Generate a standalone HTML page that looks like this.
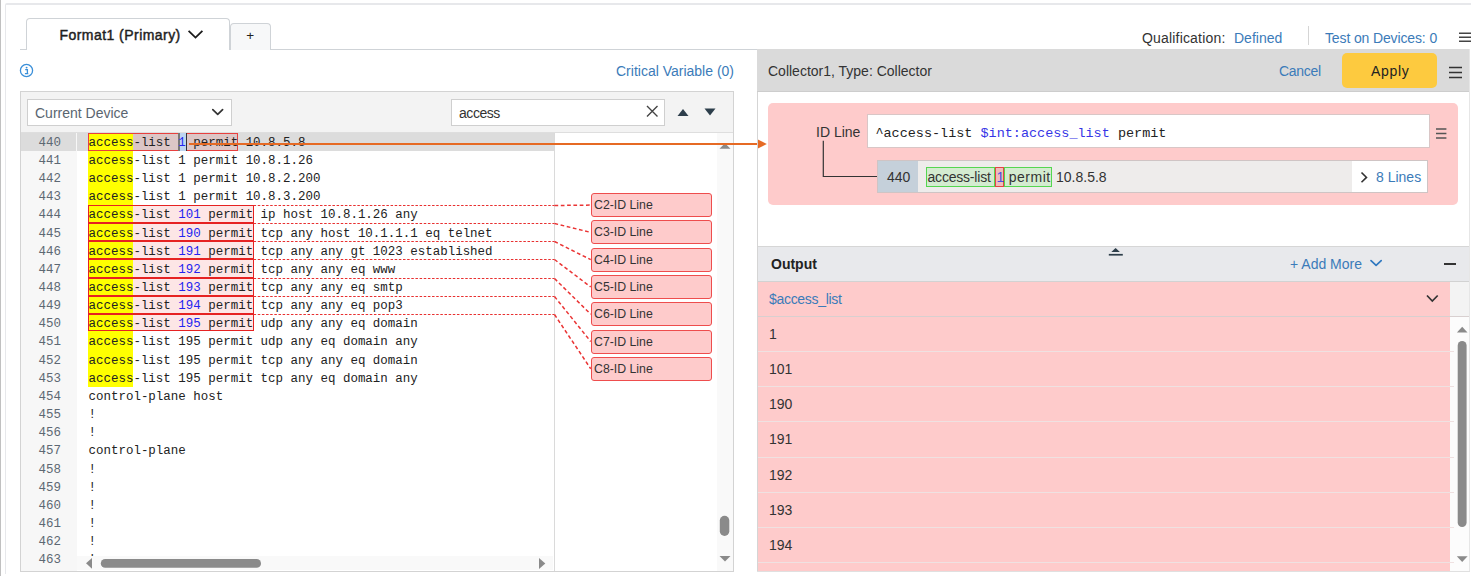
<!DOCTYPE html>
<html><head><meta charset="utf-8">
<style>
*{box-sizing:border-box;margin:0;padding:0}
html,body{width:1471px;height:576px;overflow:hidden;background:#fff;position:relative;font-family:"Liberation Sans",sans-serif;font-size:14px;color:#333}
.a{position:absolute}
.t{position:absolute;white-space:pre;line-height:20px;font-size:14px}
.mono{font-family:"Liberation Mono",monospace}
</style></head><body>
<!-- page chrome -->
<div class="a" style="left:0;top:0;width:1px;height:576px;background:#c0c0c0"></div>
<div class="a" style="left:5px;top:3px;width:1480px;height:571px;border-top:2px solid #e7e8eb;border-left:1px solid #e7e8eb;border-radius:2px 0 0 0"></div>

<!-- tabs -->
<div class="a" style="left:20px;top:49px;width:737px;height:1px;background:#cfd3d7"></div>
<div class="a" style="left:26px;top:18px;width:204px;height:32px;border:1px solid #cfd3d7;border-bottom:none;border-radius:4px 4px 0 0;background:#fff"></div>
<div class="t" style="left:59.5px;top:25px;color:#1e1e1e;-webkit-text-stroke:0.45px #1e1e1e;letter-spacing:0.45px">Format1 (Primary)</div>
<svg class="a" style="left:186px;top:28px" width="19" height="13" viewBox="0 0 19 13"><path d="M2.6 2.8 L9.5 9.6 L16.4 2.8" fill="none" stroke="#1b1b1b" stroke-width="1.8"/></svg>
<div class="a" style="left:230px;top:23px;width:41px;height:27px;border:1px solid #cfd3d7;border-bottom:none;border-radius:4px 4px 0 0;background:#f7f8f9"></div>
<div class="t" style="left:246.3px;top:26px;color:#222;font-size:13.5px">+</div>

<!-- info icon -->
<svg class="a" style="left:19px;top:63px" width="15" height="15" viewBox="0 0 15 15"><circle cx="7.5" cy="7.5" r="6.1" fill="none" stroke="#3a8fd9" stroke-width="1.3"/><circle cx="7.6" cy="4.6" r="0.95" fill="#3a8fd9"/><path d="M6.2 6.6 H8.4 V10.3 M5.9 10.6 H9.3" fill="none" stroke="#3a8fd9" stroke-width="1.3"/></svg>
<div class="t" style="left:616px;top:61px;color:#3b7bb9">Critical Variable (0)</div>

<!-- editor -->
<div class="a" style="left:20px;top:91px;width:714px;height:481px;border:1px solid #d3d3d3;background:#fff"></div>
<div class="a" style="left:21px;top:92px;width:712px;height:41px;background:#f3f3f3;border-bottom:1px solid #dedede"></div>
<div class="a" style="left:27px;top:99px;width:205px;height:27px;border:1px solid #cfcfcf;background:#fff"></div>
<div class="t" style="left:35px;top:103px;color:#5a6570">Current Device</div>
<svg class="a" style="left:209.5px;top:107px" width="15" height="10" viewBox="0 0 15 10"><path d="M2.8 2.6 L7.7 7.3 L12.6 2.6" fill="none" stroke="#333" stroke-width="1.7" stroke-linecap="round" stroke-linejoin="round"/></svg>
<div class="a" style="left:451px;top:99px;width:214px;height:27px;border:1px solid #cfcfcf;background:#fff"></div>
<div class="t" style="left:459px;top:103px;color:#333;letter-spacing:-0.45px">access</div>
<svg class="a" style="left:645px;top:104px" width="14" height="14" viewBox="0 0 14 14"><path d="M2 2 L12.5 12.5 M12.5 2 L2 12.5" fill="none" stroke="#444" stroke-width="1.4"/></svg>
<svg class="a" style="left:676px;top:107px" width="14" height="10" viewBox="0 0 14 10"><path d="M1.5 9 L7 2 L12.5 9 Z" fill="#2d3e4b"/></svg>
<svg class="a" style="left:703px;top:107px" width="14" height="10" viewBox="0 0 14 10"><path d="M1.5 1.5 L12.5 1.5 L7 8.5 Z" fill="#2d3e4b"/></svg>

<!-- code area -->
<div class="a" style="left:21px;top:133px;width:55.5px;height:438px;background:#f7f7f7"></div>
<div class="a" style="left:21px;top:132.5px;width:55px;height:18.2px;background:#dcdcdc"></div>
<div class="a" style="left:77px;top:132.5px;width:477px;height:18.2px;background:#dcdcdc"></div>
<div class="a" style="left:554px;top:133px;width:1px;height:438px;background:#dadada"></div>
<div class="a" style="left:717px;top:133px;width:16px;height:438px;background:#f9f9f9"></div>
<div class="a" style="left:88px;top:133.00px;width:45.38px;height:18.15px;background:#ffff00"></div>
<div class="a" style="left:88px;top:151.15px;width:45.38px;height:18.15px;background:#ffff00"></div>
<div class="a" style="left:88px;top:169.30px;width:45.38px;height:18.15px;background:#ffff00"></div>
<div class="a" style="left:88px;top:187.45px;width:45.38px;height:18.15px;background:#ffff00"></div>
<div class="a" style="left:88px;top:205.60px;width:45.38px;height:18.15px;background:#ffff00"></div>
<div class="a" style="left:88px;top:223.75px;width:45.38px;height:18.15px;background:#ffff00"></div>
<div class="a" style="left:88px;top:241.90px;width:45.38px;height:18.15px;background:#ffff00"></div>
<div class="a" style="left:88px;top:260.05px;width:45.38px;height:18.15px;background:#ffff00"></div>
<div class="a" style="left:88px;top:278.20px;width:45.38px;height:18.15px;background:#ffff00"></div>
<div class="a" style="left:88px;top:296.35px;width:45.38px;height:18.15px;background:#ffff00"></div>
<div class="a" style="left:88px;top:314.50px;width:45.38px;height:18.15px;background:#ffff00"></div>
<div class="a" style="left:88px;top:332.65px;width:45.38px;height:18.15px;background:#ffff00"></div>
<div class="a" style="left:88px;top:350.80px;width:45.38px;height:18.15px;background:#ffff00"></div>
<div class="a" style="left:88px;top:368.95px;width:45.38px;height:18.15px;background:#ffff00"></div>
<div class="a" style="left:133.38px;top:133.00px;width:44.88px;height:18.15px;background:#dcc6c6"></div>
<div class="a" style="left:88.00px;top:133.00px;width:90.76px;height:18.15px;border:1px solid #e8403f"></div>
<div class="a" style="left:180px;top:133.00px;width:6px;height:18.15px;background:#bdd4f0"></div>
<div class="a" style="left:178px;top:133.00px;width:2px;height:18.15px;background:#777"></div>
<div class="a" style="left:186px;top:133.00px;width:52px;height:18.15px;background:#dcc6c6;border:1px solid #e8403f;border-left:none"></div>
<div class="a" style="left:186px;top:133.00px;width:1.2px;height:18.15px;background:#333"></div>
<div class="a" style="left:133.38px;top:206px;width:119.68px;height:17px;background:#fde6e6"></div>
<div class="a" style="left:133.38px;top:224px;width:119.68px;height:17px;background:#fde6e6"></div>
<div class="a" style="left:133.38px;top:242px;width:119.68px;height:17px;background:#fde6e6"></div>
<div class="a" style="left:133.38px;top:260px;width:119.68px;height:18px;background:#fde6e6"></div>
<div class="a" style="left:133.38px;top:279px;width:119.68px;height:17px;background:#fde6e6"></div>
<div class="a" style="left:133.38px;top:297px;width:119.68px;height:17px;background:#fde6e6"></div>
<div class="a" style="left:133.38px;top:315px;width:119.68px;height:16px;background:#fde6e6"></div>
<div class="a" style="left:88px;top:205px;width:166px;height:18px;border:1px solid #e62222"></div>
<div class="a" style="left:88px;top:223px;width:166px;height:18px;border:1px solid #e62222"></div>
<div class="a" style="left:88px;top:241px;width:166px;height:18px;border:1px solid #e62222"></div>
<div class="a" style="left:88px;top:259px;width:166px;height:19px;border:1px solid #e62222"></div>
<div class="a" style="left:88px;top:278px;width:166px;height:18px;border:1px solid #e62222"></div>
<div class="a" style="left:88px;top:296px;width:166px;height:18px;border:1px solid #e62222"></div>
<div class="a" style="left:88px;top:314px;width:166px;height:17px;border:1px solid #e62222"></div>
<div class="t mono" style="left:88.5px;top:133.80px;line-height:18.15px;font-size:12.47px;color:#222">access-list <span style="color:#2424f0">1</span> permit 10.8.5.8</div>
<div class="t mono" style="left:21px;width:40px;text-align:right;top:133.80px;line-height:18.15px;font-size:12.47px;color:#5d6873">440</div>
<div class="t mono" style="left:88.5px;top:151.95px;line-height:18.15px;font-size:12.47px;color:#222">access-list <span style="color:#222">1</span> permit 10.8.1.26</div>
<div class="t mono" style="left:21px;width:40px;text-align:right;top:151.95px;line-height:18.15px;font-size:12.47px;color:#5d6873">441</div>
<div class="t mono" style="left:88.5px;top:170.10px;line-height:18.15px;font-size:12.47px;color:#222">access-list <span style="color:#222">1</span> permit 10.8.2.200</div>
<div class="t mono" style="left:21px;width:40px;text-align:right;top:170.10px;line-height:18.15px;font-size:12.47px;color:#5d6873">442</div>
<div class="t mono" style="left:88.5px;top:188.25px;line-height:18.15px;font-size:12.47px;color:#222">access-list <span style="color:#222">1</span> permit 10.8.3.200</div>
<div class="t mono" style="left:21px;width:40px;text-align:right;top:188.25px;line-height:18.15px;font-size:12.47px;color:#5d6873">443</div>
<div class="t mono" style="left:88.5px;top:206.40px;line-height:18.15px;font-size:12.47px;color:#222">access-list <span style="color:#2424f0">101</span> permit ip host 10.8.1.26 any</div>
<div class="t mono" style="left:21px;width:40px;text-align:right;top:206.40px;line-height:18.15px;font-size:12.47px;color:#5d6873">444</div>
<div class="t mono" style="left:88.5px;top:224.55px;line-height:18.15px;font-size:12.47px;color:#222">access-list <span style="color:#2424f0">190</span> permit tcp any host 10.1.1.1 eq telnet</div>
<div class="t mono" style="left:21px;width:40px;text-align:right;top:224.55px;line-height:18.15px;font-size:12.47px;color:#5d6873">445</div>
<div class="t mono" style="left:88.5px;top:242.70px;line-height:18.15px;font-size:12.47px;color:#222">access-list <span style="color:#2424f0">191</span> permit tcp any any gt 1023 established</div>
<div class="t mono" style="left:21px;width:40px;text-align:right;top:242.70px;line-height:18.15px;font-size:12.47px;color:#5d6873">446</div>
<div class="t mono" style="left:88.5px;top:260.85px;line-height:18.15px;font-size:12.47px;color:#222">access-list <span style="color:#2424f0">192</span> permit tcp any any eq www</div>
<div class="t mono" style="left:21px;width:40px;text-align:right;top:260.85px;line-height:18.15px;font-size:12.47px;color:#5d6873">447</div>
<div class="t mono" style="left:88.5px;top:279.00px;line-height:18.15px;font-size:12.47px;color:#222">access-list <span style="color:#2424f0">193</span> permit tcp any any eq smtp</div>
<div class="t mono" style="left:21px;width:40px;text-align:right;top:279.00px;line-height:18.15px;font-size:12.47px;color:#5d6873">448</div>
<div class="t mono" style="left:88.5px;top:297.15px;line-height:18.15px;font-size:12.47px;color:#222">access-list <span style="color:#2424f0">194</span> permit tcp any any eq pop3</div>
<div class="t mono" style="left:21px;width:40px;text-align:right;top:297.15px;line-height:18.15px;font-size:12.47px;color:#5d6873">449</div>
<div class="t mono" style="left:88.5px;top:315.30px;line-height:18.15px;font-size:12.47px;color:#222">access-list <span style="color:#2424f0">195</span> permit udp any any eq domain</div>
<div class="t mono" style="left:21px;width:40px;text-align:right;top:315.30px;line-height:18.15px;font-size:12.47px;color:#5d6873">450</div>
<div class="t mono" style="left:88.5px;top:333.45px;line-height:18.15px;font-size:12.47px;color:#222">access-list <span style="color:#222">195</span> permit udp any eq domain any</div>
<div class="t mono" style="left:21px;width:40px;text-align:right;top:333.45px;line-height:18.15px;font-size:12.47px;color:#5d6873">451</div>
<div class="t mono" style="left:88.5px;top:351.60px;line-height:18.15px;font-size:12.47px;color:#222">access-list <span style="color:#222">195</span> permit tcp any any eq domain</div>
<div class="t mono" style="left:21px;width:40px;text-align:right;top:351.60px;line-height:18.15px;font-size:12.47px;color:#5d6873">452</div>
<div class="t mono" style="left:88.5px;top:369.75px;line-height:18.15px;font-size:12.47px;color:#222">access-list <span style="color:#222">195</span> permit tcp any eq domain any</div>
<div class="t mono" style="left:21px;width:40px;text-align:right;top:369.75px;line-height:18.15px;font-size:12.47px;color:#5d6873">453</div>
<div class="t mono" style="left:88.5px;top:387.90px;line-height:18.15px;font-size:12.47px;color:#222">control-plane host</div>
<div class="t mono" style="left:21px;width:40px;text-align:right;top:387.90px;line-height:18.15px;font-size:12.47px;color:#5d6873">454</div>
<div class="t mono" style="left:88.5px;top:406.05px;line-height:18.15px;font-size:12.47px;color:#222">!</div>
<div class="t mono" style="left:21px;width:40px;text-align:right;top:406.05px;line-height:18.15px;font-size:12.47px;color:#5d6873">455</div>
<div class="t mono" style="left:88.5px;top:424.20px;line-height:18.15px;font-size:12.47px;color:#222">!</div>
<div class="t mono" style="left:21px;width:40px;text-align:right;top:424.20px;line-height:18.15px;font-size:12.47px;color:#5d6873">456</div>
<div class="t mono" style="left:88.5px;top:442.35px;line-height:18.15px;font-size:12.47px;color:#222">control-plane</div>
<div class="t mono" style="left:21px;width:40px;text-align:right;top:442.35px;line-height:18.15px;font-size:12.47px;color:#5d6873">457</div>
<div class="t mono" style="left:88.5px;top:460.50px;line-height:18.15px;font-size:12.47px;color:#222">!</div>
<div class="t mono" style="left:21px;width:40px;text-align:right;top:460.50px;line-height:18.15px;font-size:12.47px;color:#5d6873">458</div>
<div class="t mono" style="left:88.5px;top:478.65px;line-height:18.15px;font-size:12.47px;color:#222">!</div>
<div class="t mono" style="left:21px;width:40px;text-align:right;top:478.65px;line-height:18.15px;font-size:12.47px;color:#5d6873">459</div>
<div class="t mono" style="left:88.5px;top:496.80px;line-height:18.15px;font-size:12.47px;color:#222">!</div>
<div class="t mono" style="left:21px;width:40px;text-align:right;top:496.80px;line-height:18.15px;font-size:12.47px;color:#5d6873">460</div>
<div class="t mono" style="left:88.5px;top:514.95px;line-height:18.15px;font-size:12.47px;color:#222">!</div>
<div class="t mono" style="left:21px;width:40px;text-align:right;top:514.95px;line-height:18.15px;font-size:12.47px;color:#5d6873">461</div>
<div class="t mono" style="left:88.5px;top:533.10px;line-height:18.15px;font-size:12.47px;color:#222">!</div>
<div class="t mono" style="left:21px;width:40px;text-align:right;top:533.10px;line-height:18.15px;font-size:12.47px;color:#5d6873">462</div>
<div class="t mono" style="left:88.5px;top:551.25px;line-height:18.15px;font-size:12.47px;color:#222">!</div>
<div class="t mono" style="left:21px;width:40px;text-align:right;top:551.25px;line-height:18.15px;font-size:12.47px;color:#5d6873">463</div>
<svg class="a" style="left:0;top:0" width="1471" height="576" viewBox="0 0 1471 576">
<path d="M253.6 205.50 H554.5" fill="none" stroke="#e83030" stroke-width="1" stroke-dasharray="2.5 1.65"/>
<path d="M554.5 205.50 L590.7 205.10" fill="none" stroke="#ea3434" stroke-width="1.5" stroke-dasharray="3.7 2.6"/>
<path d="M253.6 223.50 H554.5" fill="none" stroke="#e83030" stroke-width="1" stroke-dasharray="2.5 1.65"/>
<path d="M554.5 223.50 L590.7 232.38" fill="none" stroke="#ea3434" stroke-width="1.5" stroke-dasharray="3.7 2.6"/>
<path d="M253.6 241.50 H554.5" fill="none" stroke="#e83030" stroke-width="1" stroke-dasharray="2.5 1.65"/>
<path d="M554.5 241.50 L590.7 259.66" fill="none" stroke="#ea3434" stroke-width="1.5" stroke-dasharray="3.7 2.6"/>
<path d="M253.6 259.50 H554.5" fill="none" stroke="#e83030" stroke-width="1" stroke-dasharray="2.5 1.65"/>
<path d="M554.5 259.50 L590.7 286.94" fill="none" stroke="#ea3434" stroke-width="1.5" stroke-dasharray="3.7 2.6"/>
<path d="M253.6 278.50 H554.5" fill="none" stroke="#e83030" stroke-width="1" stroke-dasharray="2.5 1.65"/>
<path d="M554.5 278.50 L590.7 314.22" fill="none" stroke="#ea3434" stroke-width="1.5" stroke-dasharray="3.7 2.6"/>
<path d="M253.6 296.50 H554.5" fill="none" stroke="#e83030" stroke-width="1" stroke-dasharray="2.5 1.65"/>
<path d="M554.5 296.50 L590.7 341.50" fill="none" stroke="#ea3434" stroke-width="1.5" stroke-dasharray="3.7 2.6"/>
<path d="M253.6 314.50 H554.5" fill="none" stroke="#e83030" stroke-width="1" stroke-dasharray="2.5 1.65"/>
<path d="M554.5 314.50 L590.7 368.78" fill="none" stroke="#ea3434" stroke-width="1.5" stroke-dasharray="3.7 2.6"/>
</svg>
<div class="a" style="left:590.5px;top:193.10px;width:121.5px;height:24px;background:#fecbcb;border:1.3px solid #ee4d4d;border-radius:3px"></div>
<div class="t" style="left:594px;top:196.10px;font-size:12.3px;line-height:18px;color:#333">C2-ID Line</div>
<div class="a" style="left:590.5px;top:220.38px;width:121.5px;height:24px;background:#fecbcb;border:1.3px solid #ee4d4d;border-radius:3px"></div>
<div class="t" style="left:594px;top:223.38px;font-size:12.3px;line-height:18px;color:#333">C3-ID Line</div>
<div class="a" style="left:590.5px;top:247.66px;width:121.5px;height:24px;background:#fecbcb;border:1.3px solid #ee4d4d;border-radius:3px"></div>
<div class="t" style="left:594px;top:250.66px;font-size:12.3px;line-height:18px;color:#333">C4-ID Line</div>
<div class="a" style="left:590.5px;top:274.94px;width:121.5px;height:24px;background:#fecbcb;border:1.3px solid #ee4d4d;border-radius:3px"></div>
<div class="t" style="left:594px;top:277.94px;font-size:12.3px;line-height:18px;color:#333">C5-ID Line</div>
<div class="a" style="left:590.5px;top:302.22px;width:121.5px;height:24px;background:#fecbcb;border:1.3px solid #ee4d4d;border-radius:3px"></div>
<div class="t" style="left:594px;top:305.22px;font-size:12.3px;line-height:18px;color:#333">C6-ID Line</div>
<div class="a" style="left:590.5px;top:329.50px;width:121.5px;height:24px;background:#fecbcb;border:1.3px solid #ee4d4d;border-radius:3px"></div>
<div class="t" style="left:594px;top:332.50px;font-size:12.3px;line-height:18px;color:#333">C7-ID Line</div>
<div class="a" style="left:590.5px;top:356.78px;width:121.5px;height:24px;background:#fecbcb;border:1.3px solid #ee4d4d;border-radius:3px"></div>
<div class="t" style="left:594px;top:359.78px;font-size:12.3px;line-height:18px;color:#333">C8-ID Line</div>
<svg class="a" style="left:717px;top:133px" width="16" height="438" viewBox="0 0 16 438"><path d="M2.5 15.7 L8 10.2 L13.5 15.7 Z" fill="#8a8a8a"/><rect x="2.8" y="382.8" width="9.5" height="20.2" rx="4.75" fill="#8a8a8a"/><path d="M2.5 423 L13.5 423 L8 428.5 Z" fill="#8a8a8a"/></svg>
<div class="a" style="left:77px;top:556px;width:476px;height:14px;background:#f9f9f9"></div>
<svg class="a" style="left:77px;top:556px" width="476" height="15" viewBox="0 0 476 15"><path d="M15 1.9 L15 12.8 L9 7.35 Z" fill="#8a8a8a"/><rect x="23.8" y="3" width="160.2" height="8.8" rx="4.4" fill="#8a8a8a"/><path d="M462 2.1 L462 13 L468.3 7.5 Z" fill="#8a8a8a"/></svg>
<svg class="a" style="left:0;top:0" width="1471" height="576" viewBox="0 0 1471 576"><path d="M189 144 H759" stroke="#e66a24" stroke-width="2"/><path d="M757.9 139.4 L766.8 144 L757.9 148.6 Z" fill="#e66a24"/></svg>


<!-- right panel -->
<div class="a" style="left:757px;top:49px;width:1px;height:523px;background:#d5d5d5"></div>
<div class="a" style="left:757px;top:49px;width:713px;height:43px;background:#dadada;border-bottom:1px solid #cdcdcd"></div>
<div class="t" style="left:768px;top:61px;color:#333">Collector1, Type: Collector</div>
<div class="t" style="left:1279px;top:61px;color:#3b7bb9;letter-spacing:-0.3px">Cancel</div>
<div class="a" style="left:1342px;top:53px;width:95px;height:35px;background:#fdca3f;border-radius:5px"></div>
<div class="t" style="left:1371px;top:61px;color:#222;letter-spacing:0.7px">Apply</div>
<svg class="a" style="left:1448px;top:65px" width="15" height="15" viewBox="0 0 15 15"><path d="M1 2.5 H14 M1 7.5 H14 M1 12.5 H14" stroke="#333" stroke-width="1.6"/></svg>

<div class="t" style="left:1142px;top:28px;color:#333;letter-spacing:0.18px">Qualification:</div>
<div class="t" style="left:1234px;top:28px;color:#3b7bb9">Defined</div>
<div class="a" style="left:1308px;top:26px;width:1px;height:19px;background:#d5d5d5"></div>
<div class="t" style="left:1325px;top:28px;color:#3b7bb9;letter-spacing:-0.13px">Test on Devices: 0</div>
<svg class="a" style="left:1458px;top:31px" width="13" height="12" viewBox="0 0 13 12"><path d="M1 2.3 H13 M1 6.2 H13 M1 10.2 H13" stroke="#444" stroke-width="1.5"/></svg>


<!-- pink card -->
<div class="a" style="left:768px;top:103px;width:689.5px;height:101.5px;background:#fecbcb;border-radius:5px"></div>
<div class="t" style="left:816px;top:121.8px;color:#333">ID Line</div>
<div class="a" style="left:867px;top:114px;width:562.5px;height:34px;background:#fff;border:1px solid #d9c6c6"></div>
<div class="t mono" style="left:875.4px;top:123.6px;font-size:13.48px;color:#222">^access-list <span style="color:#3535e6">$int:access_list</span> permit</div>
<svg class="a" style="left:1435px;top:126px" width="12" height="14" viewBox="0 0 12 14"><path d="M1 3 H11.4 M1 7.5 H11.4 M1 12 H11.4" stroke="#555" stroke-width="1.3"/></svg>
<svg class="a" style="left:0;top:0" width="1471" height="576" viewBox="0 0 1471 576"><path d="M823.3 140.8 V176.5 H877.5" fill="none" stroke="#333" stroke-width="1.2"/></svg>
<div class="a" style="left:877px;top:160px;width:551px;height:33px;background:#eeeceb;border:1px solid #cfc4c4"></div>
<div class="a" style="left:878px;top:161px;width:39.5px;height:31px;background:#c5d0da"></div>
<div class="a" style="left:1352px;top:161px;width:75px;height:31px;background:#fff"></div>
<div class="t" style="left:887px;top:166.8px;color:#333">440</div>
<div class="a" style="left:926px;top:166.5px;width:68.6px;height:20.2px;background:#d4ebd0;border:1px solid #55d650"></div>
<div class="a" style="left:994.6px;top:166.5px;width:9.7px;height:20.2px;background:#f0bcbc;border:1px solid #e34545"></div>
<div class="a" style="left:1004.3px;top:166.5px;width:47.4px;height:20.2px;background:#d4ebd0;border:1px solid #55d650"></div>
<div class="t" style="left:927.5px;top:167px;color:#333;letter-spacing:-0.2px">access-list</div>
<div class="t" style="left:996.5px;top:167px;color:#4d4de0">1</div>
<div class="t" style="left:1008.8px;top:167px;color:#333;letter-spacing:0.5px">permit</div>
<div class="t" style="left:1056px;top:167px;color:#333">10.8.5.8</div>
<svg class="a" style="left:1359px;top:171px" width="10" height="13" viewBox="0 0 10 13"><path d="M2.5 1.5 L7.5 6.4 L2.5 11.3" fill="none" stroke="#333" stroke-width="1.6"/></svg>
<div class="t" style="left:1376px;top:167px;color:#3b7bb9">8 Lines</div>

<!-- output -->
<div class="a" style="left:758px;top:245.5px;width:712px;height:36px;background:#e8e9ec;border-top:1px solid #d6d6d6;border-bottom:1px solid #d2d2d2"></div>
<div class="t" style="left:771px;top:254px;font-weight:bold;color:#222">Output</div>
<svg class="a" style="left:1107px;top:247px" width="17" height="10" viewBox="0 0 17 10"><path d="M4.3 4.9 L8.6 1 L12.9 4.9 Z" fill="#2d3e4a"/><rect x="1.8" y="6.9" width="14" height="1.7" fill="#2d3e4a"/></svg>
<div class="t" style="left:1290px;top:254px;color:#3b7bb9">+ Add More</div>
<svg class="a" style="left:1368px;top:258px" width="15" height="10" viewBox="0 0 15 10"><path d="M3 2.6 L8.1 7.3 L13.2 2.6" fill="none" stroke="#2f78c0" stroke-width="1.7" stroke-linecap="round" stroke-linejoin="round"/></svg>
<div class="a" style="left:1444px;top:263px;width:12px;height:2px;background:#333"></div>
<div class="a" style="left:758px;top:282px;width:691.5px;height:33.8px;background:#fecbcb"></div>
<div class="a" style="left:1449.5px;top:282px;width:20px;height:33.8px;background:#f3f3f3"></div>
<div class="a" style="left:758px;top:315.6px;width:712px;height:1px;background:#d8d0d0"></div>
<div class="t" style="left:769px;top:289px;color:#3b7bb9;letter-spacing:-0.3px">$access_list</div>
<svg class="a" style="left:1425px;top:293px" width="15" height="11" viewBox="0 0 15 11"><path d="M2 2.5 L7.3 8 L12.7 2.5" fill="none" stroke="#333" stroke-width="1.7"/></svg>
<div class="a" style="left:758px;top:316.6px;width:691.5px;height:255px;background:#fecbcb"></div>
<div class="a" style="left:1449.5px;top:316.6px;width:20px;height:255px;background:#fcfcfc"></div>
<div class="t" style="left:769px;top:323.65px;color:#333">1</div>
<div class="a" style="left:758px;top:350.87px;width:696px;height:1px;background:#efe1e1"></div>
<div class="t" style="left:769px;top:358.92px;color:#333">101</div>
<div class="a" style="left:758px;top:386.14px;width:696px;height:1px;background:#efe1e1"></div>
<div class="t" style="left:769px;top:394.19px;color:#333">190</div>
<div class="a" style="left:758px;top:421.41px;width:696px;height:1px;background:#efe1e1"></div>
<div class="t" style="left:769px;top:429.46px;color:#333">191</div>
<div class="a" style="left:758px;top:456.68px;width:696px;height:1px;background:#efe1e1"></div>
<div class="t" style="left:769px;top:464.73px;color:#333">192</div>
<div class="a" style="left:758px;top:491.95px;width:696px;height:1px;background:#efe1e1"></div>
<div class="t" style="left:769px;top:500.00px;color:#333">193</div>
<div class="a" style="left:758px;top:527.22px;width:696px;height:1px;background:#efe1e1"></div>
<div class="t" style="left:769px;top:535.27px;color:#333">194</div>
<div class="a" style="left:758px;top:562.49px;width:696px;height:1px;background:#efe1e1"></div>
<svg class="a" style="left:1449.5px;top:316.6px" width="20" height="255" viewBox="0 0 20 255"><path d="M6.9 15.5 L12.2 9.7 L17.5 15.5 Z" fill="#8a8a8a"/><rect x="7.7" y="24" width="8.9" height="186" rx="4.45" fill="#8a8a8a"/><path d="M6.8 239.2 L17.6 239.2 L12.2 245 Z" fill="#8a8a8a"/></svg>

<div class="a" style="left:1469px;top:49px;width:1px;height:523px;background:#e6e6e6"></div>
<div class="a" style="left:757px;top:571px;width:713px;height:1px;background:#e0e0e0"></div>
</body></html>
